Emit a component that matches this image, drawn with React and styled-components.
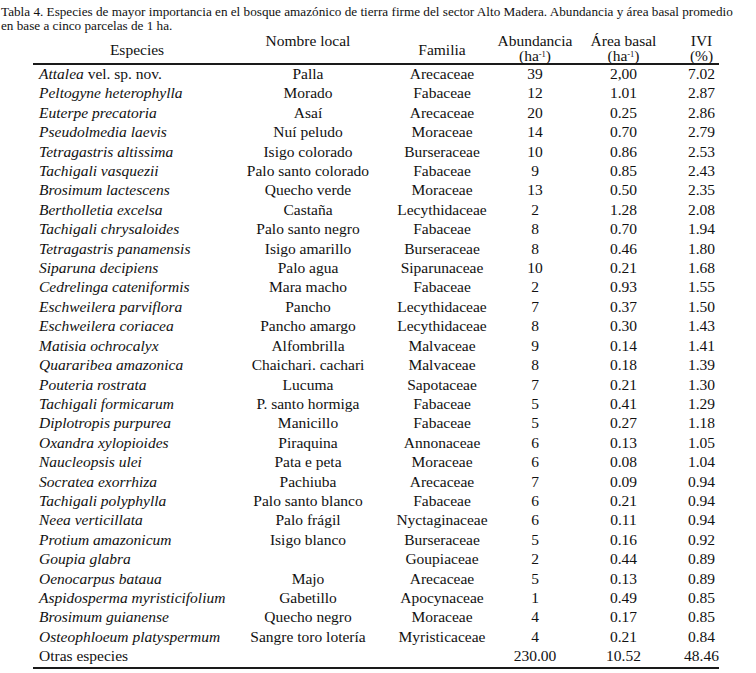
import styled, { createGlobalStyle } from 'styled-components'

const GlobalStyle = createGlobalStyle`
    body {
        margin:0;
        background:#fff;
        color:#111;
        font-family:'Liberation Serif','DejaVu Serif',serif;
    }
`

const Page = styled.div`
    width:756px;
    padding:5px 0 0 1px;
    box-sizing:border-box;
`

const Caption = styled.p`
    margin:0;
    font-size:13.2px;
    line-height:14px;
    white-space:nowrap;
`

const Table = styled.table`
    margin:0 0 0 32px;
    width:686px;
    border-collapse:collapse;
    table-layout:fixed;
    font-size:15.5px;
`

const Head = styled.th`
    font-weight:normal;
    text-align:center;
    vertical-align:${p => p.$top ? 'top' : 'middle'};
    line-height:15px;
    height:30px;
    padding:${p => p.$pad || '0'};
    border-bottom:2px solid #1a1a1a;
    box-sizing:border-box;
`

const HeadLine = styled.span`
    display:block;
    height:15px;
    overflow:visible;
`

const Cell = styled.td`
    height:19.4px;
    line-height:17.4px;
    padding:${p => p.$pad || '0'};
    padding-bottom:2px;
    text-align:${p => p.$left ? 'left' : 'center'};
    white-space:nowrap;
    vertical-align:middle;
    box-sizing:border-box;
`

const LastRow = styled.tr`
    border-bottom:2px solid #1a1a1a;
`

const Sup = styled.sup`
    font-size:8.5px;
    line-height:0;
    vertical-align:4px;
`

const rows = [
    ['Attalea', ' vel. sp. nov.', 'Palla', 'Arecaceae', '39', '2,00', '7.02'],
    ['Peltogyne heterophylla', '', 'Morado', 'Fabaceae', '12', '1.01', '2.87'],
    ['Euterpe precatoria', '', 'Asaí', 'Arecaceae', '20', '0.25', '2.86'],
    ['Pseudolmedia laevis', '', 'Nuí peludo', 'Moraceae', '14', '0.70', '2.79'],
    ['Tetragastris altissima', '', 'Isigo colorado', 'Burseraceae', '10', '0.86', '2.53'],
    ['Tachigali vasquezii', '', 'Palo santo colorado', 'Fabaceae', '9', '0.85', '2.43'],
    ['Brosimum lactescens', '', 'Quecho verde', 'Moraceae', '13', '0.50', '2.35'],
    ['Bertholletia excelsa', '', 'Castaña', 'Lecythidaceae', '2', '1.28', '2.08'],
    ['Tachigali chrysaloides', '', 'Palo santo negro', 'Fabaceae', '8', '0.70', '1.94'],
    ['Tetragastris panamensis', '', 'Isigo amarillo', 'Burseraceae', '8', '0.46', '1.80'],
    ['Siparuna decipiens', '', 'Palo agua', 'Siparunaceae', '10', '0.21', '1.68'],
    ['Cedrelinga cateniformis', '', 'Mara macho', 'Fabaceae', '2', '0.93', '1.55'],
    ['Eschweilera parviflora', '', 'Pancho', 'Lecythidaceae', '7', '0.37', '1.50'],
    ['Eschweilera coriacea', '', 'Pancho amargo', 'Lecythidaceae', '8', '0.30', '1.43'],
    ['Matisia ochrocalyx', '', 'Alfombrilla', 'Malvaceae', '9', '0.14', '1.41'],
    ['Quararibea amazonica', '', 'Chaichari. cachari', 'Malvaceae', '8', '0.18', '1.39'],
    ['Pouteria rostrata', '', 'Lucuma', 'Sapotaceae', '7', '0.21', '1.30'],
    ['Tachigali formicarum', '', 'P. santo hormiga', 'Fabaceae', '5', '0.41', '1.29'],
    ['Diplotropis purpurea', '', 'Manicillo', 'Fabaceae', '5', '0.27', '1.18'],
    ['Oxandra xylopioides', '', 'Piraquina', 'Annonaceae', '6', '0.13', '1.05'],
    ['Naucleopsis ulei', '', 'Pata e peta', 'Moraceae', '6', '0.08', '1.04'],
    ['Socratea exorrhiza', '', 'Pachiuba', 'Arecaceae', '7', '0.09', '0.94'],
    ['Tachigali polyphylla', '', 'Palo santo blanco', 'Fabaceae', '6', '0.21', '0.94'],
    ['Neea verticillata', '', 'Palo frágil', 'Nyctaginaceae', '6', '0.11', '0.94'],
    ['Protium amazonicum', '', 'Isigo blanco', 'Burseraceae', '5', '0.16', '0.92'],
    ['Goupia glabra', '', '', 'Goupiaceae', '2', '0.44', '0.89'],
    ['Oenocarpus bataua', '', 'Majo', 'Arecaceae', '5', '0.13', '0.89'],
    ['Aspidosperma myristicifolium', '', 'Gabetillo', 'Apocynaceae', '1', '0.49', '0.85'],
    ['Brosimum guianense', '', 'Quecho negro', 'Moraceae', '4', '0.17', '0.85'],
    ['Osteophloeum platyspermum', '', 'Sangre toro lotería', 'Myristicaceae', '4', '0.21', '0.84'],
]

// column padding nudges so centres line up with the original layout
const pads = {
    first: '0 0 0 6px',
    local: '0 8px 0 0',
    familia: '0 0 0 12px',
    abund: '0',
    area: '0 0 0 4px',
    ivi: '0 0 0 22px',
}

export default function App() {
    return (
        <>
            <GlobalStyle />
            <Page>
                <Caption>
                    Tabla 4. Especies de mayor importancia en el bosque amazónico de tierra firme del sector Alto Madera. Abundancia y área basal promedio
                    <br />
                    en base a cinco parcelas de 1 ha.
                </Caption>
                <Table>
                    <colgroup>
                        <col style={{ width: 208 }} />
                        <col style={{ width: 142 }} />
                        <col style={{ width: 106 }} />
                        <col style={{ width: 92 }} />
                        <col style={{ width: 81 }} />
                        <col style={{ width: 57 }} />
                    </colgroup>
                    <thead>
                        <tr>
                            <Head $pad='3px 0 0 0'>Especies</Head>
                            <Head $top $pad={pads.local}>Nombre local</Head>
                            <Head $pad='3px 0 0 12px'>Familia</Head>
                            <Head $top>
                                <HeadLine>Abundancia</HeadLine>
                                <HeadLine>(ha<Sup>-1</Sup>)</HeadLine>
                            </Head>
                            <Head $top $pad={pads.area}>
                                <HeadLine>Área basal</HeadLine>
                                <HeadLine>(ha<Sup>-1</Sup>)</HeadLine>
                            </Head>
                            <Head $top $pad={pads.ivi}>
                                <HeadLine>IVI</HeadLine>
                                <HeadLine>(%)</HeadLine>
                            </Head>
                        </tr>
                    </thead>
                    <tbody>
                        {rows.map(r => (
                            <tr key={r[0]}>
                                <Cell $left $pad={pads.first}><i>{r[0]}</i>{r[1]}</Cell>
                                <Cell $pad={pads.local}>{r[2]}</Cell>
                                <Cell $pad={pads.familia}>{r[3]}</Cell>
                                <Cell $pad={pads.abund}>{r[4]}</Cell>
                                <Cell $pad={pads.area}>{r[5]}</Cell>
                                <Cell $pad={pads.ivi}>{r[6]}</Cell>
                            </tr>
                        ))}
                        <LastRow>
                            <Cell $left $pad={pads.first}>Otras especies</Cell>
                            <Cell />
                            <Cell />
                            <Cell $pad={pads.abund}>230.00</Cell>
                            <Cell $pad={pads.area}>10.52</Cell>
                            <Cell $pad={pads.ivi}>48.46</Cell>
                        </LastRow>
                    </tbody>
                </Table>
            </Page>
        </>
    )
}
